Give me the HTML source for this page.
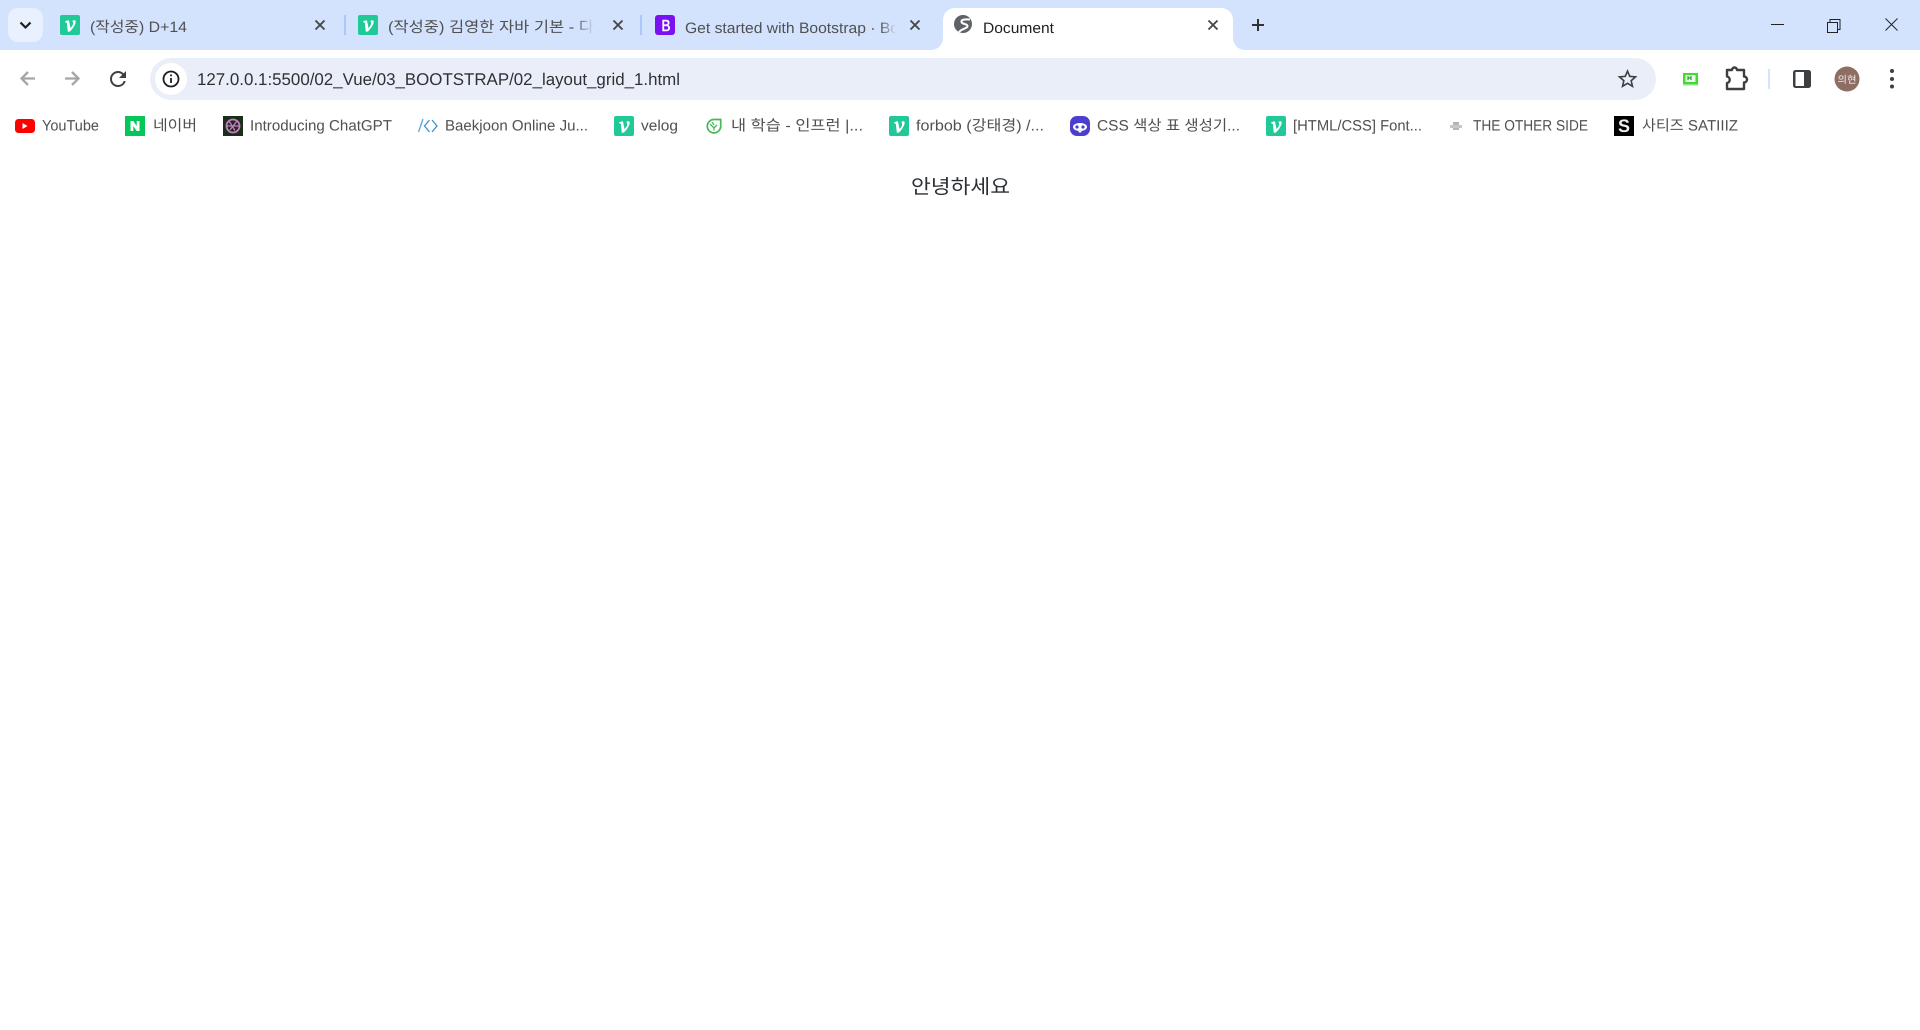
<!DOCTYPE html>
<html lang="ko"><head><meta charset="utf-8"><title>Document</title>
<style>
html,body{margin:0;padding:0;background:#fff;width:1920px;height:1030px;overflow:hidden}
svg{display:block;position:absolute;left:0;top:0}
text{font-family:"Liberation Sans","Noto Sans CJK KR",sans-serif;text-rendering:geometricPrecision}
.t{font-size:15px;fill:#505050}
.b{font-size:15px;fill:#505050}
</style></head><body>
<svg width="1920" height="1030" viewBox="0 0 1920 1030" xmlns="http://www.w3.org/2000/svg">
<defs>
<linearGradient id="f" x1="0" x2="1" y1="0" y2="0"><stop offset="0" stop-color="#d3e3fd" stop-opacity="0"/><stop offset="1" stop-color="#d3e3fd"/></linearGradient>
<clipPath id="g"><circle cx="963" cy="24" r="9"/></clipPath>
<symbol id="vel" viewBox="0 0 20 20"><rect width="20" height="20" rx="2" fill="#20c997"/><path d="M5 6.500L8 5.200L9 5.600L10.500 13C12.500 11 13.500 9 13 7.300L12.400 6C13.500 5 15.500 4.900 15.700 6.500C15.900 9 13 13.500 10 16.500L7.800 16.700L6.900 8L5 7z" fill="#fff"/></symbol>
<symbol id="x" viewBox="0 0 12 12"><path d="M1.500 1.500l9 9M10.500 1.500l-9 9" stroke="#474747" stroke-width="1.900" fill="none"/></symbol>
</defs>

<rect width="1920" height="1030" fill="#fff"/>
<rect width="1920" height="50" fill="#d3e3fd"/>
<path d="M0 62a12 12 0 0 1 12-12h1896a12 12 0 0 1 12 12z" fill="#fff"/>

<rect x="8" y="8" width="35" height="34" rx="10" fill="#e9f0fe"/>
<path d="M20.500 22.500l5 5 5-5" fill="none" stroke="#1f1f1f" stroke-width="2.200"/>

<use href="#vel" x="60" y="15" width="20" height="20"/>
<text class="t" x="90" y="32" textLength="97" lengthAdjust="spacingAndGlyphs">(작성중) D+14</text>
<use href="#x" x="314" y="19" width="12" height="12"/>
<rect x="344" y="15" width="2" height="20" fill="#a8c7fa"/>

<use href="#vel" x="358" y="15" width="20" height="20"/>
<text class="t" x="388" y="32" textLength="206" lengthAdjust="spacingAndGlyphs">(작성중) 김영한 자바 기본 - 다</text>
<rect x="576" y="12" width="18" height="26" fill="url(#f)"/>
<rect x="594" y="12" width="14" height="26" fill="#d3e3fd"/>
<use href="#x" x="612" y="19" width="12" height="12"/>
<rect x="640" y="15" width="2" height="20" fill="#a8c7fa"/>

<rect x="655" y="15" width="20" height="20" rx="3" fill="#7a11f1"/>
<text x="666" y="31" text-anchor="middle" textLength="9" lengthAdjust="spacingAndGlyphs" style="font-size:16px;fill:#fff;stroke:#fff;stroke-width:.6">B</text>
<text class="t" x="685" y="33" textLength="214" lengthAdjust="spacingAndGlyphs">Get started with Bootstrap · Bo</text>
<rect x="880" y="12" width="16" height="26" fill="url(#f)"/>
<rect x="896" y="12" width="12" height="26" fill="#d3e3fd"/>
<use href="#x" x="909" y="19" width="12" height="12"/>

<path d="M931 50a12 12 0 0 0 12-12V20a12 12 0 0 1 12-12h266a12 12 0 0 1 12 12v18a12 12 0 0 0 12 12z" fill="#fff"/>
<circle cx="963" cy="24" r="9" fill="#5f6368"/>
<path clip-path="url(#g)" d="M970 19.500C965 19 961 19.500 961.500 22C962 24.500 967.500 23.500 967.500 26C967.500 28.500 962 28.500 959 32" fill="none" stroke="#fff" stroke-width="2"/>
<text x="983" y="33" textLength="71" lengthAdjust="spacingAndGlyphs" style="font-size:15px;fill:#1f1f1f">Document</text>
<use href="#x" x="1207" y="19" width="12" height="12"/>
<path d="M1258 19v12M1252 25h12" stroke="#333" stroke-width="2"/>

<path d="M1771 24.500h13" stroke="#222" stroke-width="1"/>
<path d="M1827.500 22.500h10v10h-10zM1830 22.500v-3h10v10h-2.500" fill="none" stroke="#222" stroke-width="1"/>
<path d="M1885.500 18.500l12 12M1897.500 18.500l-12 12" stroke="#222" stroke-width="1"/>

<path d="M35 78.500H21.500M28 72l-6.500 6.500 6.500 6.500" fill="none" stroke="#a5a6a8" stroke-width="2.300"/>
<path d="M65 78.500H78.500M72 72l6.500 6.500-6.500 6.500" fill="none" stroke="#a5a6a8" stroke-width="2.300"/>
<path transform="translate(106 67)" d="M17.650 6.350A7.958 7.958 0 0 0 12 4c-4.420 0-7.990 3.580-7.990 8s3.570 8 7.990 8c3.730 0 6.840-2.550 7.730-6h-2.080A5.990 5.990 0 0 1 12 18c-3.310 0-6-2.690-6-6s2.690-6 6-6c1.660 0 3.140.690 4.220 1.780L13 11h7V4l-2.350 2.350z" fill="#3c4043"/>

<rect x="150" y="58" width="1506" height="42" rx="21" fill="#eaeef8"/>
<circle cx="171" cy="79" r="16" fill="#fff"/>
<circle cx="171" cy="79" r="7.500" fill="none" stroke="#1f1f1f" stroke-width="1.800"/>
<path d="M171 78v5M171 74.500v1.800" stroke="#1f1f1f" stroke-width="1.800"/>
<text x="197" y="85" textLength="483" lengthAdjust="spacingAndGlyphs" style="font-size:17px;fill:#303134">127.0.0.1:5500/02_Vue/03_BOOTSTRAP/02_layout_grid_1.html</text>

<path transform="translate(1615.500 67)" d="M22 9.240l-7.190-.620L12 2 9.190 8.630 2 9.240l5.460 4.730L5.820 21 12 17.270 18.180 21l-1.630-7.030L22 9.240zM12 15.400l-3.760 2.270 1-4.280-3.320-2.880 4.380-.380L12 6.100l1.710 4.040 4.380.380-3.320 2.880 1 4.280L12 15.400z" fill="#3c4043"/>

<rect x="1683" y="73" width="15" height="12" fill="#3fdc2f"/>
<rect x="1685.500" y="75" width="10" height="7" fill="#e7fbe4"/>
<path d="M1688 76v4M1691 76v4M1688 78h3" stroke="#118a10" stroke-width="1"/>
<rect x="1683" y="84" width="15" height="1.500" fill="#8ee585"/>

<path d="M1727 69.500h5a2.500 2.500 0 0 1 5 0h7v6.500a3 3 0 0 1 0 6v6.500h-17v-6a3.300 3.300 0 0 0 0-6.500z" transform="translate(0 .5)" fill="none" stroke="#3c4043" stroke-width="2.400" stroke-linejoin="round"/>

<rect x="1768" y="69" width="2" height="20" fill="#d3e3fd"/>

<rect x="1793" y="70" width="18" height="18" rx="2.500" fill="#3c4043"/>
<rect x="1795.500" y="72" width="8.500" height="14" fill="#fff"/>

<circle cx="1847" cy="79" r="12.500" fill="#8d6e63"/>
<text x="1847" y="83" text-anchor="middle" textLength="19" lengthAdjust="spacingAndGlyphs" style="font-size:10px;fill:#f2e9e6">의현</text>

<circle cx="1892" cy="71" r="2" fill="#3c4043"/><circle cx="1892" cy="79" r="2" fill="#3c4043"/><circle cx="1892" cy="86.500" r="2" fill="#3c4043"/>

<rect x="15" y="119" width="20" height="14" rx="3.500" fill="#f00"/>
<path d="M22.500 123v6l5-3z" fill="#fff"/>
<text class="b" x="42" y="130.500" textLength="57" lengthAdjust="spacingAndGlyphs">YouTube</text>

<rect x="125" y="116" width="20" height="20" fill="#03c75a"/>
<path d="M130.500 121h2.800l3.400 5v-5h2.800v10h-2.800l-3.400-5v5h-2.800z" fill="#fff"/>
<text class="b" x="153" y="130.500" textLength="44" lengthAdjust="spacingAndGlyphs">네이버</text>

<rect x="223" y="116" width="20" height="20" fill="#1c2e1a"/>
<circle cx="233" cy="126" r="6.500" fill="none" stroke="#c77dc6" stroke-width="1.800"/>
<path d="M229 121l6 9.500M237 121l-7 9M227 126h12" stroke="#c77dc6" stroke-width="1.300"/>
<text class="b" x="250" y="130.500" textLength="142" lengthAdjust="spacingAndGlyphs">Introducing ChatGPT</text>

<path d="M423 119l-4.500 13" stroke="#5aa5dc" stroke-width="1.300"/>
<path d="M429.500 120l-5 6 5 6M432 120l5 6-5 6" fill="none" stroke="#3d92d2" stroke-width="1.300"/>
<text class="b" x="445" y="130.500" textLength="143" lengthAdjust="spacingAndGlyphs">Baekjoon Online Ju...</text>

<use href="#vel" x="614" y="116" width="20" height="20"/>
<text class="b" x="641" y="130.500" textLength="37" lengthAdjust="spacingAndGlyphs">velog</text>

<path d="M714 119.500a6.700 6.700 0 1 0 6.700 6.700v-6.700z" fill="none" stroke="#47b75a" stroke-width="1.700"/>
<path d="M710 124l4 4 3-3M714 128v2.500M712 122l2 3" fill="none" stroke="#47b75a" stroke-width="1.300"/>
<text class="b" x="731" y="130.500" textLength="132" lengthAdjust="spacingAndGlyphs">내 학습 - 인프런 |...</text>

<use href="#vel" x="889" y="116" width="20" height="20"/>
<text class="b" x="916" y="130.500" textLength="128" lengthAdjust="spacingAndGlyphs">forbob (강태경) /...</text>

<rect x="1070" y="116" width="20" height="20" rx="7" fill="#4b3fd0"/>
<ellipse cx="1080" cy="127" rx="7" ry="4" fill="#fff"/>
<circle cx="1077" cy="127" r="1.600" fill="#4b3fd0"/><circle cx="1083" cy="127" r="1.600" fill="#4b3fd0"/>
<path d="M1078 131h4l-2 2z" fill="#fff"/>
<text class="b" x="1097" y="130.500" textLength="143" lengthAdjust="spacingAndGlyphs">CSS 색상 표 생성기...</text>

<use href="#vel" x="1266" y="116" width="20" height="20"/>
<text class="b" x="1293" y="130.500" textLength="129" lengthAdjust="spacingAndGlyphs">[HTML/CSS] Font...</text>

<rect x="1453" y="122" width="6" height="8" fill="#b5b5b5"/>
<rect x="1450" y="125" width="12" height="3" fill="#c7c7c7"/>
<text class="b" x="1473" y="130.500" textLength="115" lengthAdjust="spacingAndGlyphs">THE OTHER SIDE</text>

<rect x="1614" y="116" width="20" height="20" fill="#000"/>
<text x="1624" y="132" text-anchor="middle" style="font-size:18px;font-weight:bold;fill:#eee">S</text>
<text class="b" x="1642" y="130.500" textLength="96" lengthAdjust="spacingAndGlyphs">사티즈 SATIIIZ</text>

<text x="911" y="193.500" textLength="99" lengthAdjust="spacingAndGlyphs" style="font-size:20px;fill:#2c3034">안녕하세요</text>
</svg>
</body></html>
